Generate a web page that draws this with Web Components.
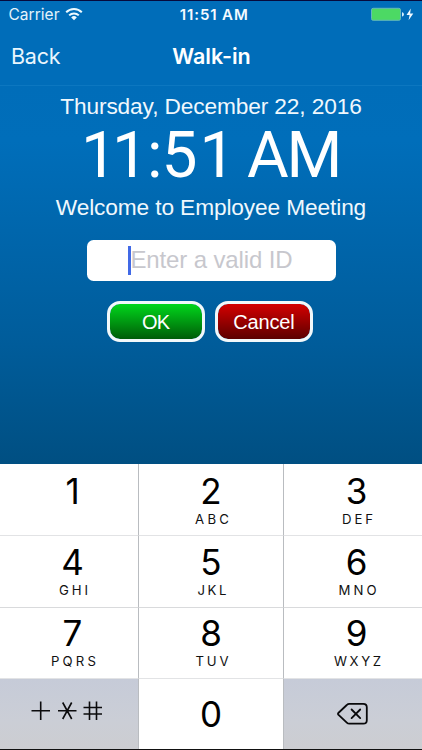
<!DOCTYPE html>
<html lang="en">
<head>
<meta charset="utf-8">
<title>Walk-in</title>
<style>
html,body{margin:0;padding:0}
body{width:422px;height:750px;overflow:hidden;background:#000}
</style>
</head>
<body>
<walk-in-app></walk-in-app>
<script>
const define = (name, html, setup) => customElements.define(name, class extends HTMLElement {
  constructor() {
    super();
    const t = document.createElement('template');
    t.innerHTML = html;
    this.attachShadow({mode: 'open'}).append(t.content.cloneNode(true));
  }
  connectedCallback() { if (setup) setup(this, this.shadowRoot); }
});

// A single line of text tracked so that its advance equals the "w" attribute.
define('fit-line', `<style>
:host{display:block;white-space:pre}
span{display:inline-block}
</style><span><slot></slot></span>`, (el, root) => {
  const s = root.querySelector('span');
  const w = parseFloat(el.getAttribute('w'));
  const n = el.textContent.length;
  if (w) {
    s.style.letterSpacing = (w - s.getBoundingClientRect().width) / (n - 1) + 'px';
    s.style.width = w + 'px';
  }
});

define('status-bar', `<style>
:host{display:grid;grid-template-columns:1fr auto 1fr;height:28px;align-items:start;padding:0 7px 0 8.5px;box-sizing:border-box;font:400 15.5px/18px Inter,sans-serif;color:#e4f3fb}
.l{display:flex;padding-top:5px}
.l svg{margin:1px 0 0 5px}
.c{padding:5px 0 0 4px;font-weight:600;font-size:15px;color:#f4faff}
.r{display:flex;justify-content:flex-end;padding-top:6px}
</style>
<div class="l"><fit-line w="51">Carrier</fit-line>
<svg width="18" height="14" viewBox="0 0 18 14"><g fill="none" stroke="#eefaff" stroke-width="2"><path d="M1.2 5.2a11 11 0 0 1 15.6 0"/><path d="M4.2 8.4a6.8 6.8 0 0 1 9.6 0"/></g><path d="M9 13.3 6.2 10.4a4 4 0 0 1 5.6 0Z" fill="#eefaff"/></svg></div>
<div class="c"><fit-line w="68">11:51 AM</fit-line></div>
<div class="r"><svg width="46" height="15" viewBox="0 0 46 15"><rect x="2.5" y="1.3" width="29" height="12" rx="1.6" fill="#4cd964" stroke="#63b8bb"/><path d="M33 5.2c2.6.5 2.6 3.7 0 4.2z" fill="#d5efff"/><path d="M41.8 1.6 37.5 8h3.1l-1 5.2L44.3 6.400h-3.200z" fill="#effaff"/></svg></div>`);

define('nav-bar', `<style>
:host{display:grid;grid-template-columns:1fr auto 1fr;height:57px;padding:0 11px;box-sizing:border-box;border-bottom:1px solid #0c77c0;font:400 21.5px/26px Inter,sans-serif;color:#eaf6fd}
fit-line{padding-top:14px}
.t{font-weight:600;color:#fff;padding-left:1px}
</style><fit-line w="49.5">Back</fit-line><fit-line class="t" w="78.5">Walk-in</fit-line><span></span>`);

define('big-clock', `<style>
:host{display:block;width:422px;height:70px}
svg{display:block;overflow:visible}
text{font:400 64px Roboto,sans-serif;fill:#fff}
</style><svg width="422" height="70"><text y="56" x="81 112 147 161.5 199.5 220 247 286.5">11:51 AM</text></svg>`);

define('id-field', `<style>
:host{display:flex;align-items:center;width:249px;height:41px;border-radius:6.500px;background:#fff;box-sizing:border-box;padding-left:41px;font:400 24px/30px "Liberation Sans",Arial,sans-serif;color:#c7c7cd}
i{width:2.500px;height:29px;background:#4169e6}
fit-line{margin-top:-1px}
</style><i></i><fit-line w="162">Enter a valid ID</fit-line>`);

define('glossy-button', `<style>
:host{display:flex;justify-content:center;width:98px;height:41px;box-sizing:border-box;border:3px solid #f2f8fa;border-radius:13px;background:linear-gradient(var(--a),var(--b)) padding-box;font:400 20px/37px "Liberation Sans",Arial,sans-serif;color:#fff}
</style><slot></slot>`);

define('pad-key', `<style>
:host{display:flex;flex-direction:column;align-items:center;box-sizing:border-box;background:#fff;color:#000;font-family:Inter,sans-serif;border-right:1px solid #b9bcc0;border-bottom:1px solid var(--line,#e2e3e5);padding-top:var(--top,8px);padding-left:var(--left,0)}
:host([last]){border-right:0}
:host([bottom]){border-bottom:0}
:host([grey]){background:linear-gradient(#c6cbd8,#cbced6 60%,#cccdd1)}
.d{font-size:35px;line-height:38px}
.s{font-size:13.200px;line-height:14px;margin-top:2px;padding-left:2px;color:#111}
</style><div class="d"><slot></slot></div><div class="s"><slot name="sub"></slot></div>`);

define('number-pad', `<style>
:host{display:grid;grid-template-columns:139px 145px 138px;grid-template-rows:72px 72px 71px 70px}
.l{--left:7px}.r2{--top:7px;--line:#d9dadc}.r3{--top:6px}.r4{--top:16px}
svg{display:block}
</style>
<pad-key class="l">1</pad-key>
<pad-key>2<fit-line slot="sub" w="34">ABC</fit-line></pad-key>
<pad-key class="l" last>3<fit-line slot="sub" w="31">DEF</fit-line></pad-key>
<pad-key class="l r2">4<fit-line slot="sub" w="29">GHI</fit-line></pad-key>
<pad-key class="r2">5<fit-line slot="sub" w="29">JKL</fit-line></pad-key>
<pad-key class="l r2" last>6<fit-line slot="sub" w="38">MNO</fit-line></pad-key>
<pad-key class="l r3">7<fit-line slot="sub" w="45">PQRS</fit-line></pad-key>
<pad-key class="r3">8<fit-line slot="sub" w="33">TUV</fit-line></pad-key>
<pad-key class="l r3" last>9<fit-line slot="sub" w="47">WXYZ</fit-line></pad-key>
<pad-key grey bottom style="--top:19px"><svg width="78" height="26" viewBox="0 0 78 26"><g transform="translate(.5 0)" fill="none" stroke="#0b0b0d" stroke-width="1.600"><path d="M1 12.700H19.500M10.200 3.500V22M27.500 12.700H46M32.200 4.500 41.200 21M41.200 4.500 32.200 21M53 9.500H71.500M53 16H71.500M59 3.500V22M66 3.500V22"/></g></svg></pad-key>
<pad-key class="r4" bottom>0</pad-key>
<pad-key grey bottom last style="--top:23px"><svg width="32" height="24" viewBox="0 0 32 24"><g fill="none" stroke="#08080a" stroke-width="1.800" stroke-linejoin="round" stroke-linecap="round"><path d="M12.300 1.800H26.300Q29.800 1.800 29.800 5.300V18.200Q29.800 21.700 26.300 21.700H12.300Q10.900 21.700 9.800 20.600L1.300 12.600Q.7 11.800 1.300 11L9.800 3Q10.900 1.800 12.300 1.800Z"/><path d="M14.600 7.500 23.200 16.100M23.200 7.500 14.600 16.100"/></g></svg></pad-key>`);

define('walk-in-app', `<style>
:host{display:flex;flex-direction:column;width:422px;height:750px;box-sizing:border-box;border-top:1px solid #060a3c;background:#111;font-family:"Liberation Sans",Arial,sans-serif;color:#fff}
.top{height:463px;display:flex;flex-direction:column;background:linear-gradient(#006db9 0,#006db9 84px,#006eba 140px,#0066ac 230px,#005c9a 345px,#004f82 463px)}
main{display:flex;flex-direction:column;align-items:center}
.date{font-size:22.700px;line-height:28px;margin-top:6px;color:#f0f8fd}
big-clock{margin-top:1px}
.welcome{font-size:22.700px;line-height:28px;margin-top:2px;color:#f0f8fd}
id-field{margin-top:18.500px;margin-left:1px}
.row{display:flex;gap:10px;margin-top:20.500px;margin-left:-2px}
</style>
<div class="top"><status-bar></status-bar><nav-bar></nav-bar>
<main>
<fit-line class="date" w="301.5">Thursday, December 22, 2016</fit-line>
<big-clock></big-clock>
<fit-line class="welcome" w="310.5">Welcome to Employee Meeting</fit-line>
<id-field></id-field>
<div class="row"><glossy-button style="--a:#00d61b;--b:#005c08"><fit-line w="28">OK</fit-line></glossy-button><glossy-button style="--a:#d40000;--b:#5c0000"><fit-line w="61.5">Cancel</fit-line></glossy-button></div>
</main></div>
<number-pad></number-pad>`);
</script>
</body>
</html>
